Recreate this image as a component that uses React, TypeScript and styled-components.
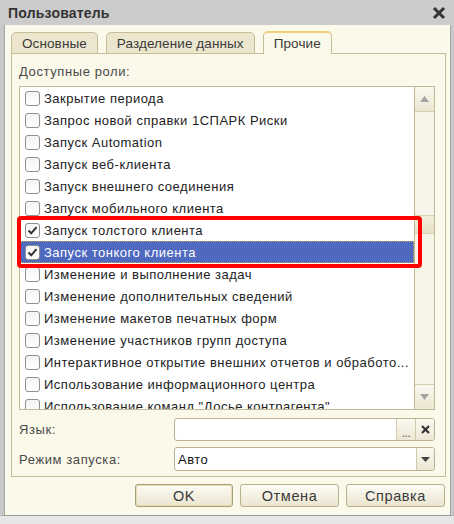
import * as React from 'react';
import styled, { createGlobalStyle } from 'styled-components';

const GlobalStyle = createGlobalStyle`
  html, body {
    margin: 0;
    padding: 0;
    background: #d4d4d4;
  }
  body {
    font-family: 'Liberation Sans', Arial, sans-serif;
    font-size: 13px;
    color: #333;
  }
`;

interface Role {
  title: string;
  checked?: boolean;
  selected?: boolean;
}

const roles: Role[] = [
  { title: 'Закрытие периода' },
  { title: 'Запрос новой справки 1СПАРК Риски' },
  { title: 'Запуск Automation' },
  { title: 'Запуск веб-клиента' },
  { title: 'Запуск внешнего соединения' },
  { title: 'Запуск мобильного клиента' },
  { title: 'Запуск толстого клиента', checked: true },
  { title: 'Запуск тонкого клиента', checked: true, selected: true },
  { title: 'Изменение и выполнение задач' },
  { title: 'Изменение дополнительных сведений' },
  { title: 'Изменение макетов печатных форм' },
  { title: 'Изменение участников групп доступа' },
  { title: 'Интерактивное открытие внешних отчетов и обработо...' },
  { title: 'Использование информационного центра' },
  { title: 'Использование команд "Досье контрагента"' },
];

const tabs = ['Основные', 'Разделение данных', 'Прочие'];

export default function App() {
  return (
    <>
      <GlobalStyle />
      <Window>
        <TitleBar>
          <Title>Пользователь</Title>
          <CloseIcon viewBox="0 0 14 14">
            <path d="M2 2 L12 12 M12 2 L2 12" />
          </CloseIcon>
        </TitleBar>
        <Body>
          <TabStrip>
            {tabs.map((t, i) => (
              <Tab key={t} $active={i === tabs.length - 1}>
                {t}
              </Tab>
            ))}
          </TabStrip>
          <Panel>
            <FieldLabel>Доступные роли:</FieldLabel>
            <ListBox>
              <Rows>
                {roles.map(r => (
                  <Row key={r.title} $selected={r.selected}>
                    <CheckBox>
                      {r.checked && (
                        <svg width="11" height="11" viewBox="0 0 11 11">
                          <path
                            d="M1.5 5.5 L4.2 8.3 L9.5 2.2"
                            fill="none"
                            stroke="#333"
                            strokeWidth="2"
                          />
                        </svg>
                      )}
                    </CheckBox>
                    <RowText>{r.title}</RowText>
                  </Row>
                ))}
              </Rows>
              <ScrollBar>
                <ScrollButton>
                  <Arrow viewBox="0 0 9 6">
                    <path d="M0 6 L4.5 0 L9 6 Z" />
                  </Arrow>
                </ScrollButton>
                <ScrollTrack>
                  <Thumb />
                </ScrollTrack>
                <ScrollButton>
                  <Arrow viewBox="0 0 9 6">
                    <path d="M0 0 L9 0 L4.5 6 Z" />
                  </Arrow>
                </ScrollButton>
              </ScrollBar>
              <Highlight />
            </ListBox>
            <FormGrid>
              <FieldLabel>Язык:</FieldLabel>
              <InputBox>
                <InputText />
                <InputButton>
                  <Dots>...</Dots>
                </InputButton>
                <InputButton>
                  <svg width="9" height="9" viewBox="0 0 9 9">
                    <path
                      d="M1 1 L8 8 M8 1 L1 8"
                      stroke="#333"
                      strokeWidth="2.2"
                    />
                  </svg>
                </InputButton>
              </InputBox>
              <FieldLabel>Режим запуска:</FieldLabel>
              <InputBox>
                <InputText>Авто</InputText>
                <DropButton>
                  <svg width="9" height="5" viewBox="0 0 9 5">
                    <path d="M0 0 L9 0 L4.5 5 Z" fill="#444" />
                  </svg>
                </DropButton>
              </InputBox>
            </FormGrid>
          </Panel>
          <ButtonRow>
            <DialogButton $default>OK</DialogButton>
            <DialogButton>Отмена</DialogButton>
            <DialogButton>Справка</DialogButton>
          </ButtonRow>
        </Body>
      </Window>
    </>
  );
}

const Window = styled.div`
  width: 454px;
  height: 524px;
  box-sizing: border-box;
  display: flex;
  flex-direction: column;
  background: #e6e6e6;
`;

const TitleBar = styled.div`
  height: 25px;
  flex: none;
  display: flex;
  align-items: center;
  justify-content: space-between;
  padding: 0 8px 0 8px;
  background: #cccccc;
`;

const Title = styled.div`
  font-weight: bold;
  font-size: 14px;
  color: #333;
  letter-spacing: 0.2px;
`;

const CloseIcon = styled.svg`
  width: 14px;
  height: 14px;
  path {
    stroke: #333;
    stroke-width: 3;
    fill: none;
  }
`;

const Body = styled.div`
  height: 491px;
  flex: none;
  box-sizing: border-box;
  background: #fbf9ea;
  border-left: 4px solid #c8c8c8;
  border-right: 3px solid #c8c8c8;
  border-bottom: 1px solid #9a9a9a;
  box-shadow: inset 1px 0 0 #a4a4a4, inset -1px 0 0 #a4a4a4;
  padding: 6px 5px 0 7px;
`;

const TabStrip = styled.div`
  display: flex;
  align-items: flex-end;
  gap: 8px;
  height: 23px;
  position: relative;
  z-index: 1;
`;

const Tab = styled.div<{ $active?: boolean }>`
  height: ${p => (p.$active ? 23 : 22)}px;
  box-sizing: border-box;
  padding: 0 10px;
  display: flex;
  align-items: center;
  font-size: 13.5px;
  letter-spacing: 0.1px;
  color: #3a3a3a;
  border: 1px solid #c7bd98;
  border-bottom: ${p => (p.$active ? 'none' : '1px solid #c7bd98')};
  border-top: ${p => (p.$active ? '2px solid #f3cf7c' : '1px solid #c7bd98')};
  border-radius: 5px 5px 0 0;
  background: ${p => (p.$active ? '#fbf9ea' : '#ece6cf')};
`;

const Panel = styled.div`
  height: 424px;
  box-sizing: border-box;
  border: 1px solid #c7bd98;
  margin-top: -1px;
  padding: 9px 10px 0 7px;
`;

const FieldLabel = styled.div`
  color: #4a4a4a;
  font-size: 13px;
  letter-spacing: 0.6px;
  height: 17px;
  line-height: 17px;
`;

const ListBox = styled.div`
  position: relative;
  margin-top: 6px;
  height: 324px;
  box-sizing: border-box;
  border: 1px solid #c2b995;
  background: #fff;
  display: flex;
`;

const Rows = styled.div`
  flex: 1;
  overflow: hidden;
`;

const Row = styled.div<{ $selected?: boolean }>`
  height: 22px;
  box-sizing: border-box;
  display: flex;
  align-items: center;
  padding-left: 5px;
  color: ${p => (p.$selected ? '#fff' : '#222')};
  background: ${p => (p.$selected ? '#4f69bf' : 'transparent')};
  outline: ${p => (p.$selected ? '1px dotted #c9a85a' : 'none')};
  outline-offset: -1px;
  white-space: nowrap;
`;

const CheckBox = styled.span`
  width: 15px;
  height: 15px;
  box-sizing: border-box;
  flex: none;
  border: 1px solid #8f8f8f;
  border-radius: 3px;
  background: linear-gradient(#f4f4f4, #ffffff);
  display: flex;
  align-items: center;
  justify-content: center;
  margin-right: 4px;
`;

const RowText = styled.span`
  font-size: 13px;
  letter-spacing: 0.5px;
`;

const ScrollBar = styled.div`
  width: 19px;
  flex: none;
  display: flex;
  flex-direction: column;
  border-left: 1px solid #c2b995;
  background: #f8f6ec;
`;

const ScrollButton = styled.div`
  height: 25px;
  flex: none;
  box-sizing: border-box;
  display: flex;
  align-items: center;
  justify-content: center;
  background: linear-gradient(#faf8ee, #ebe6d2);
  border-bottom: 1px solid #d4cdb0;
  &:last-child {
    border-bottom: none;
    border-top: 1px solid #d4cdb0;
  }
`;

const Arrow = styled.svg`
  width: 9px;
  height: 6px;
  path {
    fill: #a3a3a3;
  }
`;

const ScrollTrack = styled.div`
  flex: 1;
  position: relative;
  background: #f7f5ea;
`;

const Thumb = styled.div`
  position: absolute;
  left: 0;
  right: 0;
  top: 103px;
  height: 17px;
  background: linear-gradient(#f3efde, #e6dfc6);
  border-top: 1px solid #d8d0b0;
  border-bottom: 1px solid #d8d0b0;
`;

const Highlight = styled.div`
  position: absolute;
  left: -3px;
  top: 129px;
  width: 405px;
  height: 52px;
  box-sizing: border-box;
  border: 4px solid #ff0000;
  border-radius: 4px;
  pointer-events: none;
`;

const FormGrid = styled.div`
  display: grid;
  grid-template-columns: 155px 1fr;
  grid-template-rows: 23px 24px;
  row-gap: 6px;
  align-items: center;
  margin-top: 8px;
`;

const InputBox = styled.div`
  height: 100%;
  box-sizing: border-box;
  display: flex;
  border: 1px solid #bcb393;
  border-radius: 3px;
  background: #fff;
  overflow: hidden;
`;

const InputText = styled.div`
  flex: 1;
  padding-left: 3px;
  display: flex;
  align-items: center;
  color: #111;
  font-size: 13px;
  letter-spacing: 0.5px;
`;

const InputButton = styled.div`
  width: 18px;
  flex: none;
  display: flex;
  align-items: center;
  justify-content: center;
  background: linear-gradient(#fbf9f0, #ece7d4);
  border-left: 1px solid #d0c9ac;
`;

const Dots = styled.span`
  font-size: 12px;
  line-height: 1;
  margin-top: 6px;
  color: #555;
  letter-spacing: -0.5px;
`;

const DropButton = styled(InputButton)`
  width: 17px;
`;

const ButtonRow = styled.div`
  display: flex;
  justify-content: flex-end;
  gap: 7px;
  margin-top: 7px;
  padding-right: 1px;
`;

const DialogButton = styled.div<{ $default?: boolean }>`
  width: ${p => (p.$default ? 98 : 99)}px;
  height: 23px;
  box-sizing: border-box;
  display: flex;
  align-items: center;
  justify-content: center;
  font-size: 14.5px;
  letter-spacing: 0.6px;
  color: #3a3a3a;
  border: 1px solid ${p => (p.$default ? '#a99f7a' : '#b9b08e')};
  box-shadow: ${p => (p.$default ? 'inset 0 0 0 1px #e9dcb0' : 'none')};
  border-radius: 3px;
  background: linear-gradient(#fdfcf5, #ebe5cf);
`;
